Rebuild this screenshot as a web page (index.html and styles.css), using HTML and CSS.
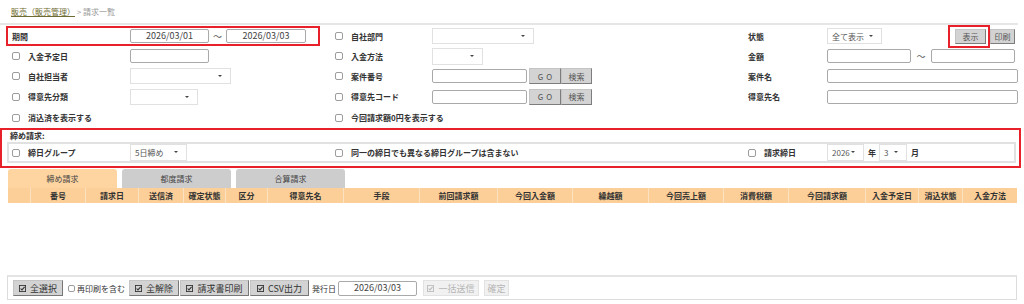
FILE: index.html
```html
<!DOCTYPE html>
<html lang="ja">
<head>
<meta charset="utf-8">
<title>請求一覧</title>
<link rel="stylesheet" href="styles.css">
</head>
<body>
<div class="crumb"><a href="#">販売（販売管理）</a><span class="sep"> &gt; 請求一覧</span></div>
<div class="rule"></div>

<div class="form">
  <div class="period">
    <div class="hl">
      <span class="lab-t">期間</span>
      <span class="inp date w79">2026/03/01</span>
      <span class="tilde">～</span>
      <span class="inp date w80">2026/03/03</span>
    </div>
  </div>
  <div class="lab"><span class="cb"></span>自社部門</div>
  <div class="fld"><span class="sel w102"></span></div>
  <div class="lab nocb">状態</div>
  <div class="fld">
    <span class="sel w55">全て表示</span>
    <span class="btns">
      <span class="hl2"><span class="btn b31">表示</span></span>
      <span class="btn b25">印刷</span>
    </span>
  </div>

  <div class="lab"><span class="cb"></span>入金予定日</div>
  <div class="fld"><span class="inp w79"></span></div>
  <div class="lab"><span class="cb"></span>入金方法</div>
  <div class="fld"><span class="sel w51 h17"></span></div>
  <div class="lab nocb">金額</div>
  <div class="fld"><span class="inp w84"></span><span class="tilde t2">～</span><span class="inp w84"></span></div>

  <div class="lab"><span class="cb"></span>自社担当者</div>
  <div class="fld"><span class="sel w101"></span></div>
  <div class="lab"><span class="cb"></span>案件番号</div>
  <div class="fld"><span class="inp w95"></span><span class="btn go">GO</span><span class="btn b31">検索</span></div>
  <div class="lab nocb">案件名</div>
  <div class="fld"><span class="inp w191"></span></div>

  <div class="lab"><span class="cb"></span>得意先分類</div>
  <div class="fld"><span class="sel w68"></span></div>
  <div class="lab"><span class="cb"></span>得意先コード</div>
  <div class="fld"><span class="inp w95"></span><span class="btn go">GO</span><span class="btn b31">検索</span></div>
  <div class="lab nocb">得意先名</div>
  <div class="fld"><span class="inp w191"></span></div>

  <div class="lab wide"><span class="cb"></span>消込済を表示する</div>
  <div class="lab wide"><span class="cb"></span>今回請求額0円を表示する</div>
</div>

<div class="closing">
  <div class="closing-title">締め請求:</div>
  <div class="closing-row">
    <div class="lab"><span class="cb"></span>締日グループ</div>
    <div class="fld"><span class="sel w57">5日締め</span></div>
    <div class="lab wide"><span class="cb"></span>同一の締日でも異なる締日グループは含まない</div>
    <div class="lab"><span class="cb"></span>請求締日</div>
    <div class="fld"><span class="sel w37">2026</span><span class="unit">年</span><span class="sel w28">3</span><span class="unit">月</span></div>
  </div>
</div>

<div class="tabs">
  <div class="tab on">締め請求</div>
  <div class="tab">都度請求</div>
  <div class="tab">合算請求</div>
</div>
<div class="thead">
  <div></div><div>番号</div><div>請求日</div><div>送信済</div><div>確定状態</div><div>区分</div><div>得意先名</div><div>手段</div><div>前回請求額</div><div>今回入金額</div><div>繰越額</div><div>今回売上額</div><div>消費税額</div><div>今回請求額</div><div>入金予定日</div><div>消込状態</div><div>入金方法</div>
</div>
<div class="tbody"></div>

<div class="toolbar">
  <span class="tb w50"><svg class="ic" viewBox="0 0 8 8"><rect x="0.5" y="0.5" width="7" height="7" fill="none" stroke="currentColor"/><path d="M1.8 4 L3.4 5.6 L6.4 2.2" fill="none" stroke="currentColor" stroke-width="1.2"/></svg>全選択</span>
  <span class="chk"><span class="cb sm"></span>再印刷を含む</span>
  <span class="tb w50"><svg class="ic" viewBox="0 0 8 8"><rect x="0.5" y="0.5" width="7" height="7" fill="none" stroke="currentColor"/><path d="M1.8 4 L3.4 5.6 L6.4 2.2" fill="none" stroke="currentColor" stroke-width="1.2"/></svg>全解除</span>
  <span class="tb w69"><svg class="ic" viewBox="0 0 8 8"><rect x="0.5" y="0.5" width="7" height="7" fill="none" stroke="currentColor"/><path d="M1.8 4 L3.4 5.6 L6.4 2.2" fill="none" stroke="currentColor" stroke-width="1.2"/></svg>請求書印刷</span>
  <span class="tb w59"><svg class="ic" viewBox="0 0 8 8"><rect x="0.5" y="0.5" width="7" height="7" fill="none" stroke="currentColor"/><path d="M1.8 4 L3.4 5.6 L6.4 2.2" fill="none" stroke="currentColor" stroke-width="1.2"/></svg>CSV出力</span>
  <span class="issue">発行日</span>
  <span class="inp date w79 tbin">2026/03/03</span>
  <span class="tb dis w56"><svg class="ic" viewBox="0 0 8 8"><rect x="0.5" y="0.5" width="7" height="7" fill="none" stroke="currentColor"/><path d="M1.8 4 L3.4 5.6 L6.4 2.2" fill="none" stroke="currentColor" stroke-width="1.2"/></svg>一括送信</span>
  <span class="tb dis w25">確定</span>
</div>
</body>
</html>
```
FILE: styles.css
```css
* { box-sizing: border-box; }
html, body { margin: 0; padding: 0; }
body {
  width: 1024px;
  height: 304px;
  overflow: hidden;
  background: #fff;
  color: #333;
  font-family: "Noto Sans CJK JP", "Noto Sans", sans-serif;
  font-size: 8px;
}

.crumb {
  height: 23px;
  padding: 3px 0 0 11px;
  line-height: 18px;
  font-size: 8px;
}
.crumb a { color: #6f6c33; text-decoration: underline; }
.crumb .sep { color: #9a9a9a; }

.rule { height: 2px; background: #e6e6e6; margin-right: 6px; }

.form {
  display: grid;
  grid-template-columns: 118px 205px 97px 316px 79px 191px;
  grid-template-rows: 20px 20px 20px 21px 21px;
  align-items: center;
  padding-left: 12px;
  margin-top: 1px;
}
.lab {
  display: flex;
  align-items: center;
  font-weight: bold;
  white-space: nowrap;
}
.lab.nocb { padding-left: 0; }
.lab.wide { grid-column: span 2; }
.fld { display: flex; align-items: center; }

.cb {
  display: inline-block;
  width: 8px;
  height: 8px;
  border: 1px solid #9c9c9c;
  border-radius: 2px;
  background: #fff;
  margin-right: 8px;
  flex: none;
}
.cb.sm { width: 7px; height: 7px; margin-right: 2px; }

.period { grid-column: 1 / 3; height: 20px; }
.hl {
  display: flex;
  align-items: center;
  margin-left: -6px;
  width: 314px;
  height: 20px;
  border: 2px solid #e8202a;
  padding-left: 4px;
}
.lab-t { width: 118px; font-weight: bold; }
.tilde { width: 17px; text-align: center; color: #555; font-size: 9px; }
.tilde.t2 { width: 20px; }

.inp {
  display: inline-block;
  height: 14px;
  border: 1px solid #a9a9a9;
  border-radius: 2px;
  background: #fff;
  flex: none;
}
.inp.date {
  font-size: 9px;
  line-height: 12px;
  text-align: center;
  color: #444;
}
.sel {
  position: relative;
  display: inline-flex;
  align-items: center;
  height: 16px;
  border: 1px solid #e1e1e1;
  background: #fff;
  padding-left: 4px;
  color: #555;
  font-size: 8px;
  flex: none;
}
.sel::after {
  content: "";
  position: absolute;
  right: 8px;
  top: 6px;
  border-left: 2px solid transparent;
  border-right: 2px solid transparent;
  border-top: 2px solid #444;
}
.sel.h17 { height: 17px; }

.w28 { width: 28px; } .w37 { width: 37px; } .w51 { width: 51px; } .w55 { width: 55px; }
.w57 { width: 57px; } .w68 { width: 68px; } .w79 { width: 79px; } .w80 { width: 80px; }
.w84 { width: 84px; } .w95 { width: 95px; } .w101 { width: 101px; } .w102 { width: 102px; }
.w191 { width: 191px; }

.btn {
  display: inline-flex;
  align-items: center;
  justify-content: center;
  height: 16px;
  background: #d3d3d3;
  border: 1px solid #c4c4c4;
  border-right-color: #7d7d7d;
  border-bottom-color: #7d7d7d;
  color: #555;
  font-size: 8px;
  flex: none;
}
.btn.go { width: 32px; margin-left: 2px; letter-spacing: 3px; padding-left: 3px; font-size: 8px; }
.btn.b31 { width: 31px; }
.btn.b25 { width: 25px; height: 15px; }
.btns { display: flex; align-items: center; margin-left: auto; margin-right: 3px; }
.hl2 {
  display: flex;
  border: 2px solid #e8202a;
  padding: 2px 2px 2px 5px;
  height: 23px;
}
.hl2 .btn { height: 15px; }

.closing {
  margin-top: 0;
  width: 1021px;
  height: 40px;
  border: 2px solid #e8202a;
  padding: 0 0 0 5px;
}
.closing-title {
  height: 12px;
  line-height: 12px;
  font-weight: bold;
  padding-left: 3px;
}
.closing-row {
  display: grid;
  grid-template-columns: 118px 205px 97px 316px 79px 1fr;
  align-items: center;
  width: 1009px;
  height: 21px;
  border: 2px solid #e1e1e1;
  padding-left: 3px;
}
.closing-row .sel { height: 17px; }
.unit { font-weight: bold; margin: 0 3px 0 4px; }

.tabs {
  display: flex;
  gap: 5px;
  margin-top: 1px;
  padding-left: 8px;
  height: 19px;
}
.tab {
  width: 109px;
  height: 19px;
  line-height: 19px;
  text-align: center;
  background: #cdcdcd;
  border-radius: 3px 3px 0 0;
  color: #444;
}
.tab.on { background: #fed5a1; }

.thead {
  display: grid;
  grid-template-columns: 22px 55px 53px 45px 42px 42px 76px 76px 78px 75px 76px 75px 65px 77px 53px 44px 55px;
  margin-left: 8px;
  width: 1009px;
  height: 15px;
  background: #fdcf98;
  font-weight: bold;
  color: #333;
}
.thead div {
  line-height: 15px;
  text-align: center;
  border-left: 1px solid #fde2c2;
  white-space: nowrap;
}
.thead div:first-child { border-left: 0; }

.tbody { height: 72px; }

.toolbar {
  display: flex;
  align-items: center;
  margin-left: 7px;
  width: 1010px;
  height: 25px;
  border: 1px solid #dcdcdc;
  border-top: 2px solid #e4e4e4;
  padding-left: 5px;
  font-size: 9px;
}
.tb {
  display: inline-flex;
  align-items: center;
  justify-content: center;
  height: 16px;
  background: #d3d3d3;
  border: 1px solid #c4c4c4;
  border-right-color: #777;
  border-bottom-color: #777;
  color: #333;
  margin-right: 1px;
  flex: none;
}
.tb .ic { width: 7px; height: 7px; margin-right: 4px; color: #333; }
.tb.w50 { width: 50px; } .tb.w69 { width: 69px; } .tb.w59 { width: 59px; }
.tb.w56 { width: 56px; } .tb.w25 { width: 25px; }
.tb.dis {
  background: #f1f1f1;
  border-color: #e2e2e2;
  color: #b5b5b5;
  margin-left: 4px;
}
.tb.dis .ic { color: #bbb; }
.chk {
  display: inline-flex;
  align-items: center;
  margin: 0 4px 0 4px;
  font-size: 8px;
  color: #333;
  white-space: nowrap;
}
.issue { margin: 0 2px 0 2px; font-size: 8px; }
.tbin { height: 15px; line-height: 13px; margin-right: 2px; }
```
